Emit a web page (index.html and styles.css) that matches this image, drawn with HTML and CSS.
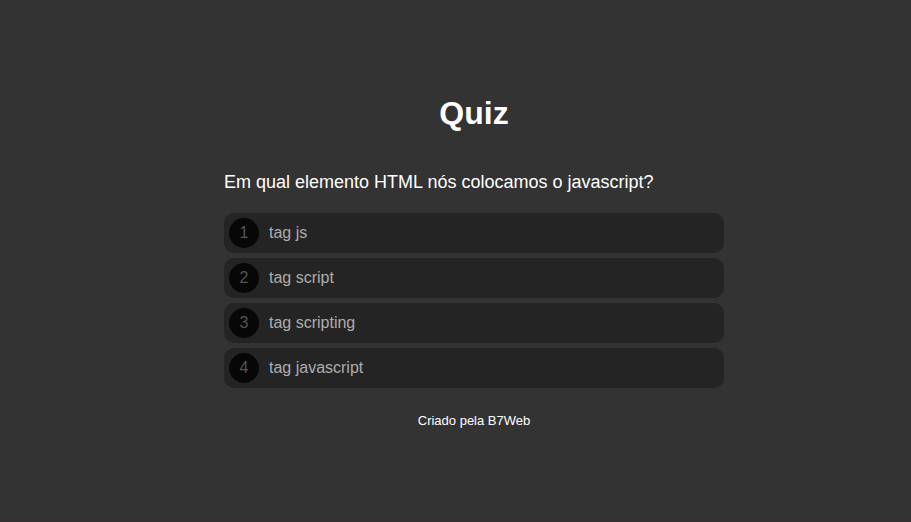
FILE: index.html
```html
<!DOCTYPE html>
<html lang="pt-BR">
<head>
<meta charset="utf-8">
<meta name="viewport" content="width=device-width, initial-scale=1">
<title>Quiz</title>
<link rel="stylesheet" href="styles.css">
</head>
<body>
<main class="quiz">
  <h1 class="title">Quiz</h1>
  <h2 class="question">Em qual elemento HTML nós colocamos o javascript?</h2>
  <div class="options">
    <button class="option" type="button"><span class="number">1</span><span>tag js</span></button>
    <button class="option" type="button"><span class="number">2</span><span>tag script</span></button>
    <button class="option" type="button"><span class="number">3</span><span>tag scripting</span></button>
    <button class="option" type="button"><span class="number">4</span><span>tag javascript</span></button>
  </div>
  <footer class="credit">Criado pela B7Web</footer>
</main>
</body>
</html>
```
FILE: styles.css
```css
* { box-sizing: border-box; }

body {
  min-height: 100vh;
  margin: 0;
  padding: 95px 0 0 37px;
  border-bottom: 3px solid #352f33;
  background: #333;
  color: #fff;
  font-family: "Liberation Sans", Arial, sans-serif;
}

.quiz {
  width: 100%;
  max-width: 500px;
  margin: 0 auto;
}

.title {
  margin: 0 0 40px;
  font-size: 32px;
  line-height: 36px;
  text-align: center;
}

.question {
  margin: 0 0 20px;
  font-size: 18px;
  font-weight: 400;
  line-height: 22px;
}

.options {
  display: flex;
  flex-direction: column;
  gap: 5px;
}

.option {
  display: flex;
  align-items: center;
  gap: 10px;
  padding: 5px;
  border: 0;
  border-radius: 10px;
  background: #242424;
  color: #adadad;
  font: inherit;
  text-align: left;
  cursor: pointer;
}

.number {
  width: 30px;
  border-radius: 50%;
  background: #070707;
  color: #555;
  line-height: 30px;
  text-align: center;
}

.credit {
  margin-top: 25px;
  font-size: 13px;
  line-height: 15px;
  text-align: center;
}
```
